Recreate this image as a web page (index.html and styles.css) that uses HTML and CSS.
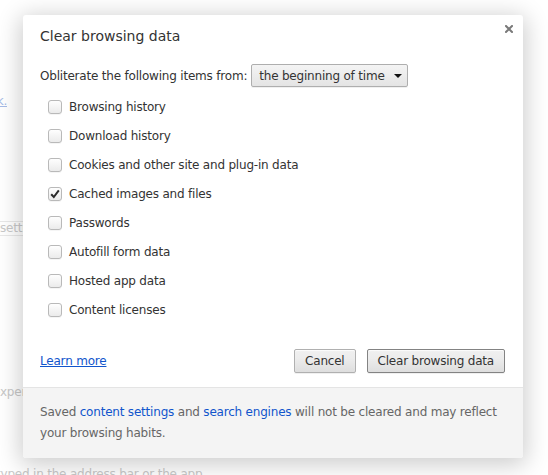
FILE: index.html
```html
<!DOCTYPE html>
<html lang="en">
<head>
<meta charset="utf-8">
<title>Clear browsing data</title>
<link rel="stylesheet" href="styles.css">
</head>
<body>
<div class="page">
  <div class="bg-r1"><span class="bg-link">Learn more about this link.</span></div>
  <div class="bg-field">settings</div>
  <div class="bg-r3">experience</div>
  <div class="bg-r4">typed in the address bar or the app</div>
</div>

<div class="overlay">
  <div class="dialog">
    <div class="dlg-body">
      <h1 class="title">Clear browsing data</h1>
      <button class="close" aria-label="Close">
        <svg width="8" height="8" viewBox="0 0 8 8"><path d="M1 1L7 7M7 1L1 7" stroke="#7a7a7a" stroke-width="2" stroke-linecap="square"/></svg>
      </button>
      <div class="from-row">
        <span>Obliterate the following items from:</span>
        <div class="select">
          <span>the beginning of time</span>
          <svg width="8" height="4" viewBox="0 0 8 4"><path d="M0 0H8L4 4Z" fill="#111"/></svg>
        </div>
      </div>
      <ul class="items">
        <li><span class="cb"></span>Browsing history</li>
        <li><span class="cb"></span>Download history</li>
        <li><span class="cb"></span>Cookies and other site and plug-in data</li>
        <li><span class="cb checked"><svg width="10" height="10" viewBox="0 0 10 10"><path d="M1.2 5.2L3.8 8L8.8 1.4" fill="none" stroke="#2b2b2b" stroke-width="2"/></svg></span>Cached images and files</li>
        <li><span class="cb"></span>Passwords</li>
        <li><span class="cb"></span>Autofill form data</li>
        <li><span class="cb"></span>Hosted app data</li>
        <li><span class="cb"></span>Content licenses</li>
      </ul>
      <div class="actions">
        <a class="link" href="#">Learn more</a>
        <div class="btns">
          <button class="btn">Cancel</button>
          <button class="btn default">Clear browsing data</button>
        </div>
      </div>
    </div>
    <div class="dlg-foot">
      Saved <a class="flink" href="#">content settings</a> and <a class="flink" href="#">search engines</a> will not be cleared and may reflect your browsing habits.
    </div>
  </div>
</div>
</body>
</html>
```

FILE: styles.css
```css
* { box-sizing: border-box; }
html, body { margin: 0; height: 100%; }
body {
  background: #fff;
  font-family: "DejaVu Sans", "Liberation Sans", sans-serif;
  font-size: 12px;
  letter-spacing: -0.2px;
  color: #333;
  overflow: hidden;
  position: relative;
}

/* faded page behind the dialog */
.page { padding-top: 93px; color: #c8c8c8; white-space: nowrap; }
.bg-r1 {
  width: 7px; height: 16px; line-height: 16px;
  display: flex; justify-content: flex-end;
}
.bg-link { color: #a6bbe6; text-decoration: underline; }
.bg-field {
  margin-top: 112px; margin-left: -10px; width: 200px; height: 15px;
  padding-left: 10px; line-height: 13px;
  border-top: 1px solid #e8e8e8; border-bottom: 1px solid #e8e8e8;
}
.bg-r3 { margin-top: 148px; margin-left: -7px; height: 16px; line-height: 16px; }
.bg-r4 { margin-top: 66px; margin-left: -4px; height: 16px; line-height: 16px; }

/* dialog */
.overlay { position: absolute; inset: 0; padding: 15px 0 0 23px; }
.dialog {
  width: 500px;
  background: #fff;
  border-radius: 3px;
  box-shadow: 0 4px 23px 3px rgba(0,0,0,0.2);
  overflow: hidden;
}
.dlg-body { position: relative; padding: 11px 18px 14px 17px; }
.title {
  margin: 0; font-size: 14px; font-weight: normal; line-height: 20px;
  letter-spacing: 0; color: #333;
}
.close {
  position: absolute; top: 10px; right: 10px;
  width: 8px; height: 8px; padding: 0; border: 0; background: none;
  display: block;
}
.close svg { display: block; }

.from-row {
  margin-top: 18px; height: 23px;
  display: flex; align-items: center; gap: 4px;
}
.select {
  height: 23px;
  display: flex; align-items: center; gap: 9px;
  padding: 0 5px 0 7px;
  border: 1px solid #aeaeae;
  border-radius: 2px;
  background: linear-gradient(#f4f4f4, #e4e4e4);
  box-shadow: 0 1px 0 rgba(0,0,0,0.06);
  color: #333;
}

.items { list-style: none; margin: 5px 0 0; padding: 0 0 0 8px; }
.items li { height: 29px; display: flex; align-items: center; gap: 7px; }
.cb {
  width: 14px; height: 14px; flex: none;
  border: 1px solid #b9b9b9;
  border-radius: 3px;
  background: linear-gradient(#fefefe, #ebebeb);
  box-shadow: 0 1px 0 rgba(0,0,0,0.04);
  display: flex; align-items: center; justify-content: center;
}
.cb svg { display: block; }

.actions {
  margin-top: 25px; height: 24px;
  display: flex; align-items: center; justify-content: space-between;
}
.link { color: #15c; text-decoration: underline; }
.btns { display: flex; gap: 11px; }
.btn {
  height: 24px; padding: 0 10px;
  font: inherit; letter-spacing: inherit; color: #333;
  border: 1px solid #b0b0b0;
  border-radius: 2px;
  background: linear-gradient(#f0f0f0, #ececec 40%, #dedede);
  box-shadow: 0 1px 0 rgba(0,0,0,0.06), inset 0 1px 1px rgba(255,255,255,0.8);
}
.btn.default { border-color: #838383; }

.dlg-foot {
  border-top: 1px solid #e4e4e4;
  background: #f4f4f4;
  padding: 14px 17px;
  line-height: 21px;
  color: #666;
}
.flink { color: #15c; text-decoration: none; }
```
